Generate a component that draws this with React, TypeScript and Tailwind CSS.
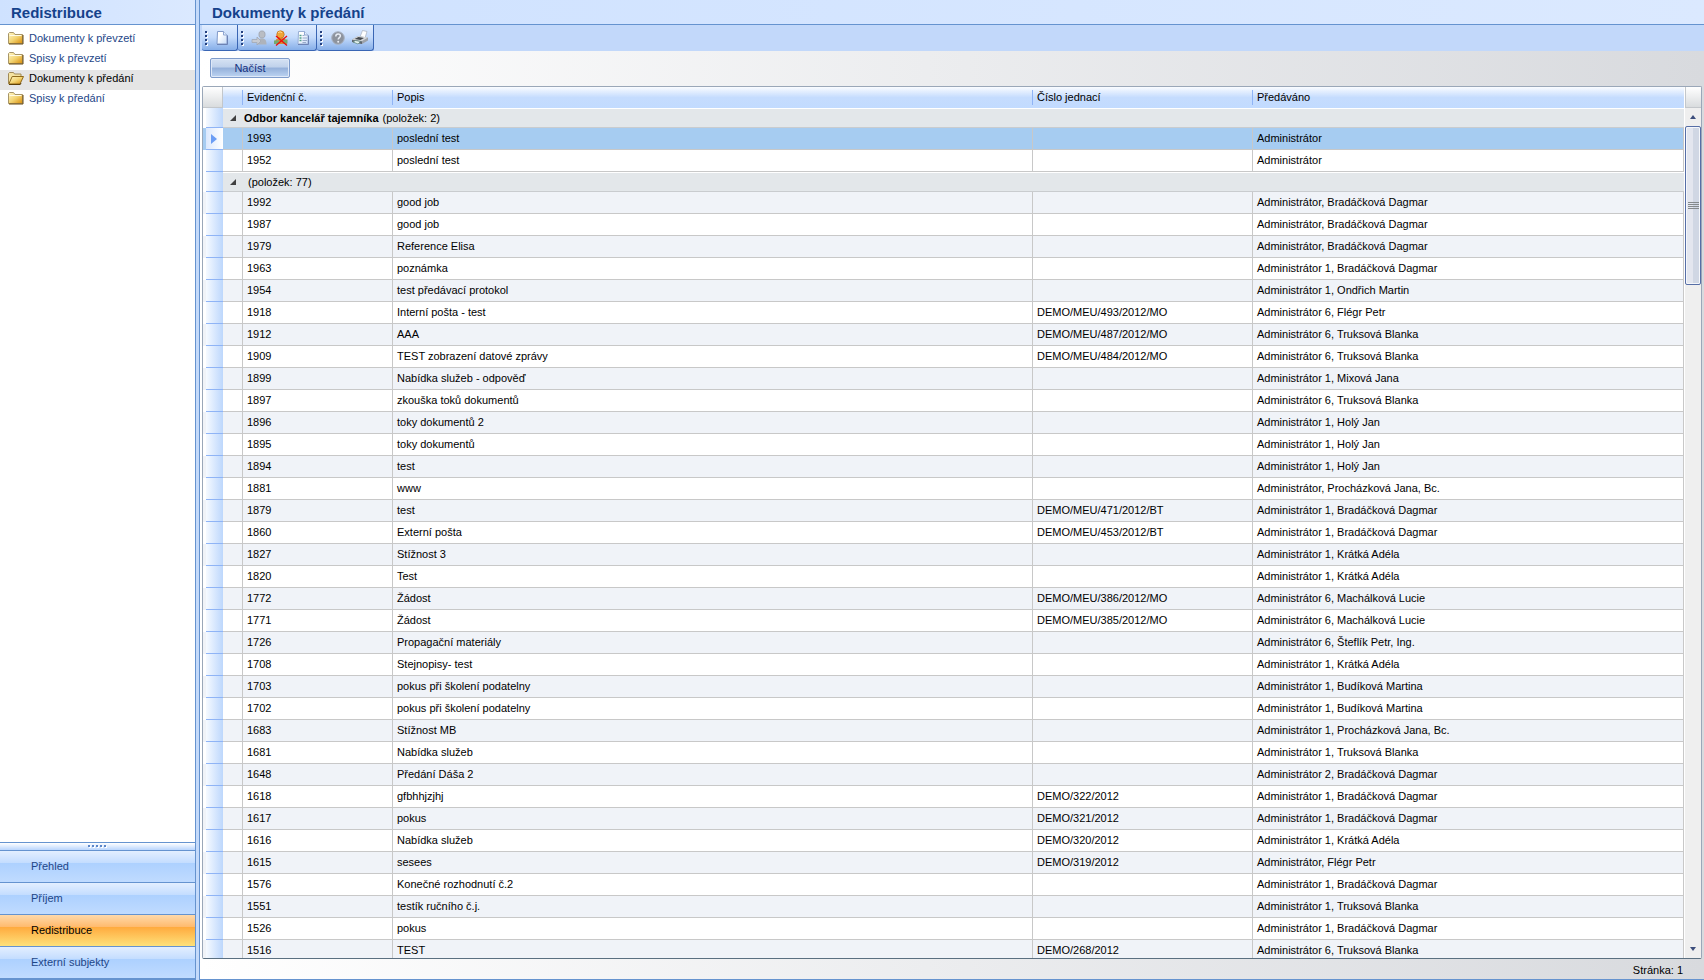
import React from "react";

type Row = [string, string, string, string];

const office: Row[] = [
  ["1993", "poslední test", "", "Administrátor"],
  ["1952", "poslední test", "", "Administrátor"],
];

const unassigned: Row[] = [
  ["1992", "good job", "", "Administrátor, Bradáčková Dagmar"],
  ["1987", "good job", "", "Administrátor, Bradáčková Dagmar"],
  ["1979", "Reference Elisa", "", "Administrátor, Bradáčková Dagmar"],
  ["1963", "poznámka", "", "Administrátor 1, Bradáčková Dagmar"],
  ["1954", "test předávací protokol", "", "Administrátor 1, Ondřich Martin"],
  ["1918", "Interní pošta - test", "DEMO/MEU/493/2012/MO", "Administrátor 6, Flégr Petr"],
  ["1912", "AAA", "DEMO/MEU/487/2012/MO", "Administrátor 6, Truksová Blanka"],
  ["1909", "TEST zobrazení datové zprávy", "DEMO/MEU/484/2012/MO", "Administrátor 6, Truksová Blanka"],
  ["1899", "Nabídka služeb - odpověď", "", "Administrátor 1, Mixová Jana"],
  ["1897", "zkouška toků dokumentů", "", "Administrátor 6, Truksová Blanka"],
  ["1896", "toky dokumentů 2", "", "Administrátor 1, Holý Jan"],
  ["1895", "toky dokumentů", "", "Administrátor 1, Holý Jan"],
  ["1894", "test", "", "Administrátor 1, Holý Jan"],
  ["1881", "www", "", "Administrátor, Procházková Jana, Bc."],
  ["1879", "test", "DEMO/MEU/471/2012/BT", "Administrátor 1, Bradáčková Dagmar"],
  ["1860", "Externí pošta", "DEMO/MEU/453/2012/BT", "Administrátor 1, Bradáčková Dagmar"],
  ["1827", "Stížnost 3", "", "Administrátor 1, Krátká Adéla"],
  ["1820", "Test", "", "Administrátor 1, Krátká Adéla"],
  ["1772", "Žádost", "DEMO/MEU/386/2012/MO", "Administrátor 6, Machálková Lucie"],
  ["1771", "Žádost", "DEMO/MEU/385/2012/MO", "Administrátor 6, Machálková Lucie"],
  ["1726", "Propagační materiály", "", "Administrátor 6, Šteflík Petr, Ing."],
  ["1708", "Stejnopisy- test", "", "Administrátor 1, Krátká Adéla"],
  ["1703", "pokus při školení podatelny", "", "Administrátor 1, Budíková Martina"],
  ["1702", "pokus při školení podatelny", "", "Administrátor 1, Budíková Martina"],
  ["1683", "Stížnost MB", "", "Administrátor 1, Procházková Jana, Bc."],
  ["1681", "Nabídka služeb", "", "Administrátor 1, Truksová Blanka"],
  ["1648", "Předání Dáša 2", "", "Administrátor 2, Bradáčková Dagmar"],
  ["1618", "gfbhhjzjhj", "DEMO/322/2012", "Administrátor 1, Bradáčková Dagmar"],
  ["1617", "pokus", "DEMO/321/2012", "Administrátor 1, Bradáčková Dagmar"],
  ["1616", "Nabídka služeb", "DEMO/320/2012", "Administrátor 1, Krátká Adéla"],
  ["1615", "sesees", "DEMO/319/2012", "Administrátor, Flégr Petr"],
  ["1576", "Konečné rozhodnutí č.2", "", "Administrátor 1, Bradáčková Dagmar"],
  ["1551", "testík ručního č.j.", "", "Administrátor 1, Truksová Blanka"],
  ["1526", "pokus", "", "Administrátor 1, Bradáčková Dagmar"],
  ["1516", "TEST", "DEMO/268/2012", "Administrátor 6, Truksová Blanka"],
];

const folders = ["Dokumenty k převzetí", "Spisy k převzetí", "Dokumenty k předání", "Spisy k předání"];
const sections = ["Přehled", "Příjem", "Redistribuce", "Externí subjekty"];

function FolderIcon({ open }: { open: boolean }) {
  return (
    <svg width="16" height="13" viewBox="0 0 16 13" className="shrink-0">
      <defs>
        <linearGradient id="folderFill" x1="0" y1="0" x2="1" y2="1">
          <stop offset="0" stopColor="#fff6c8" />
          <stop offset="0.5" stopColor="#f3d574" />
          <stop offset="1" stopColor="#d98c08" />
        </linearGradient>
      </defs>
      {open ? (
        <>
          <path d="M.5 11.5V1.5L1.5.5h4l1 1.5h6.5v3" fill="#f5e3a0" stroke="#a08a58" />
          <path d="M.8 12 4.2 4.5h11.3L12 12z" fill="url(#folderFill)" stroke="#8f6a1c" />
          <path d="M1 12.5h11.3L13 11" fill="none" stroke="#5c3f08" />
        </>
      ) : (
        <>
          <path d="M.5 11.5v-10L1.5.5h4L7 2.5h7.5v9z" fill="url(#folderFill)" stroke="#a89668" />
          <path d="M1.5 3.5h12" stroke="#fffbe6" />
          <path d="M1 12h14V3" fill="none" stroke="#6b4a10" />
        </>
      )}
    </svg>
  );
}

function PageIcon({ list = false }: { list?: boolean }) {
  return (
    <svg width="12" height="14" viewBox="0 0 12 14">
      <defs>
        <linearGradient id="pageFill" x1="0" y1="0" x2="1" y2="1">
          <stop offset="0.3" stopColor="#fff" />
          <stop offset="1" stopColor="#c6dbf8" />
        </linearGradient>
      </defs>
      <path d="M1.500.5h6l3.500 3.500v9H1z" fill="url(#pageFill)" stroke={list ? "#98aed4" : "#8199c8"} />
      <path d="M1 13.500h10.500V4.500" fill="none" stroke="#6c82b4" />
      <path d="M7.500.5V4H11" fill="#e4effd" stroke="#8fa6d2" />
      {list && (
        <>
          <path d="M2.500 4.500h2M2.500 7h2M2.500 9.500h2" stroke="#4fa08a" strokeWidth="1.300" />
          <path d="M5.500 4.500h2M5.500 7H10M5.500 9.500H10M5.500 11.500H9" stroke="#9aabcb" />
        </>
      )}
    </svg>
  );
}

function PersonArrowIcon() {
  return (
    <svg width="16" height="16" viewBox="0 0 16 16">
      <path d="M8 4.500C8 2 9 1 11 1s3 1 3 3.500S13 8 11 8 8 7 8 4.500z" fill="#b9bdc4" stroke="#a3a8b2" />
      <path d="M6 14.500c0-4 1-6 4.700-6s4.800 2 4.800 6z" fill="#aeb3bb" />
      <path d="M1 9.500h5V7l4 4-4 4v-2.500H1z" fill="#c7cbd2" stroke="#a2a8b4" strokeWidth=".8" />
    </svg>
  );
}

function PersonRemoveIcon() {
  return (
    <svg width="16" height="16" viewBox="0 0 16 16">
      <path d="M2 14c0-4 1-6 5.500-6S14 10 14 14z" fill="#d98a33" />
      <path d="M1 10.500h5v3.500H1z" fill="#77a86e" />
      <path d="M10 9.500h4.500v4H10z" fill="#77a86e" />
      <circle cx="7.500" cy="4.500" r="3.700" fill="#f0a437" stroke="#c7761b" strokeWidth=".8" />
      <path d="M5 3c1-1.500 3-1.500 4 0" fill="none" stroke="#ffdc91" />
      <path d="m3 6 11 9.500M14 6 3 15.500" stroke="#f00b0b" strokeWidth="1.300" />
    </svg>
  );
}

function HelpIcon() {
  return (
    <svg width="14" height="14" viewBox="0 0 14 14">
      <circle cx="7" cy="7" r="6.300" fill="#8d939d" stroke="#a9b2c2" />
      <path d="M4.800 5.400C4.800 3.900 5.700 3 7.100 3s2.300.9 2.300 2.100c0 1.500-2.200 1.700-2.200 3.400" fill="none" stroke="#e8edf5" strokeWidth="1.500" />
      <circle cx="7.200" cy="10.700" r="1" fill="#e8edf5" />
    </svg>
  );
}

function PrinterIcon() {
  return (
    <svg width="18" height="15" viewBox="0 0 18 15">
      <path d="m9 7 2.500-6.500 4.500 1L14 8z" fill="#fff" stroke="#a5adba" strokeWidth=".7" />
      <path d="m1 9.500 6-3.500 10 1.500v3L11 14 1 12z" fill="#9da2a9" />
      <path d="m1 9.500 6-3.500 10 1.500-6 3.500z" fill="#d6d9dc" />
      <path d="m3.500 9 4-2 5.500 1-3.500 2z" fill="#44494f" />
      <path d="m1 10 10 1.500V14L1 12z" fill="#5f656d" />
      <path d="m2 12 2.500-1.500 5 1L7 14z" fill="#e5f1ee" stroke="#46786f" strokeWidth=".6" />
    </svg>
  );
}

function ToolGroup({ children }: { children: React.ReactNode }) {
  return (
    <div className="flex h-[26px] items-center rounded-b-[3px] border-r border-b border-[#3a66b4] bg-gradient-to-b from-[#e1edff] via-[#c3dafb] to-[#86aee8] pl-[3px]">
      <div className="flex flex-col gap-[2px]">
        {[0, 1, 2, 3].map((i) => (
          <span key={i} className="size-[2px] bg-[#24407f] shadow-[1px_1px_0_#fff]" />
        ))}
      </div>
      {children}
    </div>
  );
}

function ToolButton({ label, children }: { label: string; children: React.ReactNode }) {
  return (
    <button type="button" aria-label={label} className="flex h-6 w-[22px] items-center justify-center">
      {children}
    </button>
  );
}

function IndicatorCell({ selected = false }: { selected?: boolean }) {
  return (
    <td className="p-0">
      <div className="flex h-full pl-[3px]">
        <div
          className={`flex h-full w-full items-center justify-center border-b border-[#8fb4f6] pr-[2px] ${
            selected ? "bg-gradient-to-r from-[#dbe8fd] to-white" : "bg-gradient-to-r from-[#f6faff] to-[#bdd7fc]"
          }`}
        >
          {selected && (
            <svg width="6" height="10" viewBox="0 0 6 10">
              <path d="M0 0 6 5 0 10z" fill="#6b9df5" />
            </svg>
          )}
        </div>
      </div>
    </td>
  );
}

function GroupRow({ name, count }: { name?: string; count: number }) {
  return (
    <tr className="h-5">
      <IndicatorCell />
      <td colSpan={5} className="border-t border-b border-t-white border-b-[#c9cccf] bg-[#e3e7ea] p-0">
        <div className="flex items-center pl-[7px]">
          <svg width="6" height="6" viewBox="0 0 6 6" className="mr-2">
            <path d="M6 0v6H0z" fill="#404040" />
          </svg>
          {name && <b>{name}</b>}
          <span className="pl-1">(položek: {count})</span>
        </div>
      </td>
    </tr>
  );
}

function DataRow({ row, tone, selected = false }: { row: Row; tone: string; selected?: boolean }) {
  return (
    <tr className={`h-[22px] ${tone}`} aria-selected={selected}>
      <IndicatorCell selected={selected} />
      <td className="border-r border-b border-[#c8c8c8] p-0" />
      {row.map((text, i) => (
        <td key={i} className="truncate border-r border-b border-[#c8c8c8] pt-0 pr-1 pb-[2px] pl-1">
          {text}
        </td>
      ))}
    </tr>
  );
}

function HeaderCell({ children }: { children: React.ReactNode }) {
  return (
    <th scope="col" className="p-0 text-left font-normal">
      <div className="-ml-px border-l border-[#8fb4f6] pl-1 leading-[15px]">{children}</div>
    </th>
  );
}

export default function App() {
  return (
    <div className="flex h-screen overflow-hidden bg-[#c4dafa] font-['Liberation_Sans',Arial,sans-serif] text-[11px] leading-[14px] text-black">
      <aside className="flex w-[196px] shrink-0 flex-col border-r border-[#6593cf] bg-white text-[#1e4687]">
        <h1 className="h-[25px] border-b border-[#6593cf] bg-gradient-to-r from-[#cfe2ff] to-[#dbe9ff] pl-[11px] text-[15px] leading-[26px] font-bold text-[#15428b]">
          Redistribuce
        </h1>
        <nav className="flex-1 pt-[5px]" aria-label="Složky">
          {folders.map((name, i) => (
            <a
              key={name}
              href="#"
              className={`flex h-5 items-center gap-[5px] pb-1 pl-2 ${i === 2 ? "bg-[#e5e5e5] text-black" : ""}`}
            >
              <FolderIcon open={i === 2} />
              {name}
            </a>
          ))}
        </nav>
        <div className="flex h-[9px] items-center justify-center gap-[2px] border-y border-[#6593cf] bg-gradient-to-b from-white to-[#b9d5fd] pr-[2px] pb-px">
          {[0, 1, 2, 3, 4].map((i) => (
            <span key={i} className="size-[2px] bg-[#5b86c9] shadow-[1px_1px_0_#fff]" />
          ))}
        </div>
        <nav className="border-b border-[#6593cf]" aria-label="Moduly">
          {sections.map((name, i) => (
            <a
              key={name}
              href="#"
              className={`flex h-8 items-center border-b border-[#6593cf] pb-[2px] pl-[31px] ${
                i === 2
                  ? "bg-[linear-gradient(#ffd9aa,#ffbb6e_38%,#ffab3f_40%,#fee17a)] text-black"
                  : "bg-[linear-gradient(#e3efff,#c4ddff_38%,#add1ff_40%,#c0dbff)]"
              }`}
            >
              {name}
            </a>
          ))}
        </nav>
      </aside>

      <main className="ml-[3px] flex min-w-0 flex-1 flex-col border-b border-l border-[#6593cf] bg-gradient-to-r from-white to-[#d8dade]">
        <h2 className="h-[25px] shrink-0 border-b border-[#6593cf] bg-gradient-to-r from-[#cfe2ff] to-[#dbe9ff] pl-3 text-[15px] leading-[26px] font-bold text-[#15428b]">
          Dokumenty k předání
        </h2>
        <div className="flex h-[26px] shrink-0 bg-[#c2d8fa] pl-[2px]" role="toolbar" aria-label="Nástroje">
          <ToolGroup>
            <div className="flex px-1">
              <ToolButton label="Nový">
                <PageIcon />
              </ToolButton>
            </div>
          </ToolGroup>
          <ToolGroup>
            <div className="flex pr-[2px] pl-[5px]">
              <ToolButton label="Předat">
                <PersonArrowIcon />
              </ToolButton>
              <ToolButton label="Zrušit předání">
                <PersonRemoveIcon />
              </ToolButton>
              <ToolButton label="Vlastnosti">
                <PageIcon list />
              </ToolButton>
            </div>
          </ToolGroup>
          <ToolGroup>
            <div className="flex pr-[2px] pl-[5px]">
              <ToolButton label="Nápověda">
                <HelpIcon />
              </ToolButton>
              <ToolButton label="Tisk">
                <PrinterIcon />
              </ToolButton>
            </div>
          </ToolGroup>
        </div>

        <div className="flex h-[35px] shrink-0 items-start px-[10px] pt-[7px]">
          <button
            type="button"
            className="h-5 w-20 rounded-[2px] border border-[#7f9ccb] bg-[linear-gradient(#d6e2f3,#bfd1eb_45%,#94b0da_50%,#bdd4f2)] text-[#15307e] inset-shadow-[0_0_0_1px_#dfe9f8]"
          >
            Načíst
          </button>
        </div>

        <div className="mr-[2px] ml-[2px] flex min-h-0 flex-1 overflow-hidden rounded-[2px] border border-[#9aa7b8] border-b-[#5a6f80] bg-white">
          <div className="min-w-0 flex-1 overflow-hidden">
            <table className="h-px w-full table-fixed border-separate border-spacing-0">
              <colgroup>
                <col className="w-5" />
                <col className="w-5" />
                <col className="w-[150px]" />
                <col className="w-[640px]" />
                <col className="w-[220px]" />
                <col />
              </colgroup>
              <thead>
                <tr className="h-[21px] bg-[linear-gradient(#fafcff,#c5dcfe_50%,#c2dbff)]">
                  <th className="border-r border-b border-[#c3c7cb] bg-gradient-to-b from-white to-[#d9dcde] p-0" />
                  <th className="p-0" />
                  <HeaderCell>Evidenční č.</HeaderCell>
                  <HeaderCell>Popis</HeaderCell>
                  <HeaderCell>Číslo jednací</HeaderCell>
                  <HeaderCell>Předáváno</HeaderCell>
                </tr>
              </thead>
              <tbody>
                <GroupRow name="Odbor kancelář tajemníka" count={2} />
                {office.map((row, i) => (
                  <DataRow key={row[0]} row={row} selected={i === 0} tone={i === 0 ? "bg-[#a6ccf1]" : "bg-white"} />
                ))}
                <GroupRow count={77} />
                {unassigned.map((row, i) => (
                  <DataRow key={row[0]} row={row} tone={i % 2 ? "bg-white" : "bg-[#f0f3f8]"} />
                ))}
              </tbody>
            </table>
          </div>
          <div className="flex w-[17px] shrink-0 flex-col border-l border-white bg-[#efefef]">
            <div className="h-[21px] border-b border-l border-[#c3c7cb] bg-gradient-to-b from-white to-[#d9dcde]" />
            <button type="button" aria-label="Nahoru" className="flex h-[18px] items-center justify-center">
              <svg width="6" height="4" viewBox="0 0 6 4">
                <path d="M3 0 6 4H0z" fill="#3d4e7c" />
              </svg>
            </button>
            <div className="flex h-[159px] flex-col items-center justify-center gap-px rounded-[2px] border border-[#566ea6] bg-[linear-gradient(90deg,#e3e6ef_50%,#d0d7e4_50%)] inset-shadow-[0_0_0_1px_#f5f7fb]">
              {[0, 1, 2, 3].map((i) => (
                <span key={i} className="h-px w-[11px] bg-[#858a8c]" />
              ))}
            </div>
            <div className="flex-1" />
            <button type="button" aria-label="Dolů" className="flex h-[18px] items-center justify-center">
              <svg width="6" height="4" viewBox="0 0 6 4">
                <path d="M0 0h6L3 4z" fill="#3d4e7c" />
              </svg>
            </button>
          </div>
        </div>
        <footer className="flex h-5 shrink-0 items-center justify-end pt-[2px] pr-[21px]">Stránka: 1</footer>
      </main>
    </div>
  );
}
